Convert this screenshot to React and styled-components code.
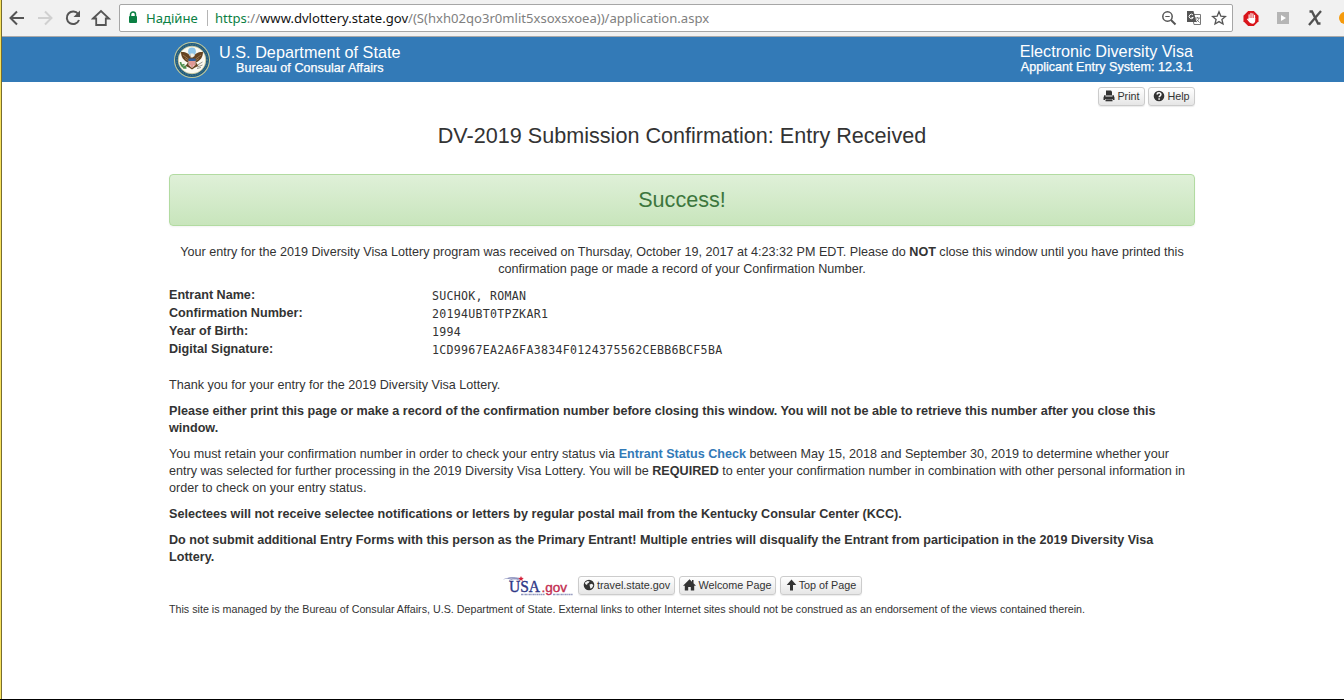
import React from 'react';
import styled, { createGlobalStyle } from 'styled-components';

const Global = createGlobalStyle`
  * { box-sizing: border-box; }
  html, body { margin: 0; padding: 0; height: 700px; overflow: hidden; background: #fff; }
  #root { height: 700px; }
  body { font: 12.6px/17px "Liberation Sans", Arial, sans-serif; color: #333; }
`;

const Screen = styled.div`
  height: 700px;
  border-bottom: 1px solid #000;
  position: relative;
  display: flex;
  flex-direction: column;
`;
const EdgeStripe = styled.div`
  position: absolute;
  left: 0;
  top: 0;
  width: 2px;
  height: 699px;
  background: #f7e15c;
  border-right: 1px solid #776d30;
`;
const BrowserBar = styled.div`
  height: 37px;
  flex: none;
  background: #f1f1f1;
  border-bottom: 1px solid #a9a9a9;
  display: flex;
  align-items: center;
  padding-left: 7px;
  overflow: hidden;
`;
const NavIcons = styled.div`
  display: flex;
  gap: 8px;
  width: 112px;
  flex: none;
  svg { flex: none; }
`;
const Address = styled.div`
  width: 1114px;
  height: 28px;
  flex: none;
  background: #fff;
  border: 1px solid #a6a6a6;
  border-radius: 2px;
  display: flex;
  align-items: center;
  padding: 0 5px 0 8px;
  font: 13.09px/20px "Noto Sans", "Open Sans", sans-serif;
  white-space: nowrap;
`;
const Secure = styled.span`
  color: #0b8043;
  margin-left: 8px;
  width: 61px;
`;
const Divider = styled.span`
  width: 1px;
  height: 16px;
  background: #b5b5b5;
  margin-right: 7px;
`;
const Url = styled.span`
  color: #808080;
  flex: 1;
  b { font-weight: 400; color: #111; }
  i { font-style: normal; color: #0b8043; }
`;
const AddressIcons = styled.div`
  display: flex;
  gap: 9px;
  align-items: center;
`;
const Extensions = styled.div`
  display: flex;
  align-items: center;
  gap: 16px;
  padding-left: 10px;
  flex: none;
  svg { flex: none; }
`;

const Banner = styled.header`
  height: 45px;
  flex: none;
  background: #337ab7;
  color: #fff;
`;
const Container = styled.div`
  width: 1026px;
  margin-left: 169px;
`;
const BannerInner = styled(Container)`
  height: 45px;
  display: flex;
  align-items: center;
  padding: 0 2px 0 4px;
`;
const Agency = styled.div`
  margin: 0 auto 0 8px;
  text-align: center;
`;
const SystemName = styled.div`
  text-align: right;
  margin-top: -2px;
`;
const BannerTitle = styled.div`
  font-size: 16.2px;
  line-height: 18px;
  white-space: nowrap;
  letter-spacing: ${p => p.$ls || 0}px;
`;
const BannerSub = styled.div`
  font-size: 12.6px;
  line-height: 15px;
  white-space: nowrap;
  -webkit-text-stroke: 0.25px #fff;
  letter-spacing: ${p => p.$ls || 0}px;
`;
const Toolbar = styled.div`
  display: flex;
  justify-content: flex-end;
  gap: 3px;
  padding-top: 5px;
`;
const Button = styled.button`
  height: 19px;
  width: ${p => p.$w}px;
  padding: 0 0 2px;
  display: flex;
  align-items: center;
  justify-content: center;
  gap: 2px;
  font: 10.8px/16px "Liberation Sans", Arial, sans-serif;
  color: #333;
  white-space: nowrap;
  border: 1px solid #ccc;
  border-radius: 3px;
  background: linear-gradient(#fff, #e6e6e6);
  box-shadow: 0 1px 1px rgba(0, 0, 0, 0.08);
`;
const Title = styled.h1`
  margin: 17px 0 0;
  font-size: 21.6px;
  line-height: 26px;
  font-weight: 400;
  text-align: center;
`;
const Alert = styled.div`
  margin-top: 25px;
  height: 52px;
  border: 1px solid #b2dba1;
  border-radius: 4px;
  background: linear-gradient(#dff0d8, #c8e5bc);
  box-shadow: 0 1px 2px rgba(0, 0, 0, 0.05);
  color: #3c763d;
  font-size: 21.6px;
  line-height: 49px;
  text-align: center;
`;
const Paragraph = styled.p`
  margin: ${p => p.$top ?? 9}px 0 0;
  text-align: ${p => (p.$center ? 'center' : 'left')};
  font-weight: ${p => (p.$bold ? 700 : 400)};
`;
const Line = styled.span`
  display: block;
  white-space: nowrap;
`;
const Details = styled.dl`
  margin: 8px 0 0;
  display: grid;
  grid-template-columns: 263px 1fr;
  grid-auto-rows: 18px;
  line-height: 18px;
`;
const Term = styled.dt`
  font-weight: 700;
`;
const Value = styled.dd`
  margin: 0;
  padding-top: 1px;
  font-family: "DejaVu Sans Mono", monospace;
  font-size: 11.6px;
  letter-spacing: 0.28px;
`;
const Link = styled.a`
  color: #337ab7;
  font-weight: 700;
`;
const FooterLinks = styled.div`
  display: flex;
  gap: 4px;
  margin: 10px 0 0 333px;
  height: 21px;
`;
const FinePrint = styled.div`
  margin-top: 4px;
  font-size: 10.71px;
  line-height: 17px;
  white-space: nowrap;
`;

const Stroke = ({ w = 20, color = '#555', sw = 2, children }) => (
  <svg width={w} height="20" viewBox={`0 0 ${w} 20`} fill="none" stroke={color} strokeWidth={sw}>{children}</svg>
);

const Seal = () => (
  <svg width="38" height="38" viewBox="0 0 38 38">
    <circle cx="19" cy="19" r="18" fill="#c3ca9a" />
    <circle cx="19" cy="19" r="17" fill="#215b80" />
    <circle cx="19" cy="19" r="15.400" fill="none" stroke="#4f8288" strokeWidth="1" strokeDasharray="1.2 1.3" />
    <circle cx="19" cy="19" r="13.800" fill="#fbfaf2" stroke="#d3cb96" strokeWidth=".8" />
    <circle cx="19" cy="10.400" r="3.900" fill="#8fc6e8" />
    <path d="M17 15.500c-1-3.500-5-5-9-4.500 0 5 2.500 8.500 7 10.500L12.500 25l3.500 1.500 3 2 3-2 3.500-1.500-2.500-3.500C27.500 19.500 30 16 30 11c-4-.5-8 1-9 4.500l-1-2h-2z" fill="#654422" />
    <path d="M10 14l5.500 4M12 17.500l4 2.500M28 14l-5.500 4M26 17.500L22 20" stroke="#a5835a" strokeWidth=".8" />
    <path d="M17.500 12.500h3l1 2.500-2 1.500h-2z" fill="#f1eee2" />
    <path d="M15.500 17.500h7v2.500h-7z" fill="#315f9d" />
    <path d="M15.500 20h7v4l-3.500 3-3.500-3z" fill="#f3d8d2" />
    <path d="M17 20v4.500M19 20v6M21 20v4.500" stroke="#c94c4c" strokeWidth=".9" />
    <path d="M7.500 21c.5 4 3 6 6 6M8.500 24.500l3-1M10 27l3-2" stroke="#4d8e4c" strokeWidth="1.700" fill="none" />
    <path d="M24.500 24l5-3M24.500 26l5-2M24 27.500l4-1" stroke="#8c8b82" strokeWidth=".9" />
  </svg>
);

const PrintIcon = () => (
  <svg width="12" height="12" viewBox="0 0 12 12">
    <path d="M3 .5h5l1 1V5.500H3z" fill="#333" />
    <path d="M1.500 5h1v1.500h7V5h1l1 2.500V10H10V8.500H2V10H.5V7.500z" fill="#333" />
    <path d="M2.500 9.300h7v2h-7z" fill="#333" />
    <path d="M1.500 7h9v2h-9z" fill="#333" />
  </svg>
);
const HelpIcon = () => (
  <svg width="12" height="12" viewBox="0 0 12 12">
    <circle cx="6" cy="6" r="5.300" fill="#333" />
    <path d="M4.200 4.500c0-2.200 3.800-2.200 3.700 0 0 1.300-1.700 1.300-1.800 2.700M6.100 8.200v1.500" fill="none" stroke="#fff" strokeWidth="1.500" />
  </svg>
);
const GlobeIcon = () => (
  <svg width="12" height="12" viewBox="0 0 12 12">
    <circle cx="6" cy="6" r="5.300" fill="#333" />
    <path d="M2 3.500L4.500 2l2.300.4L5.500 4l-1 .5L4 6 2.200 5zM6.500 5.500l2.500-.7 1.300 1.400-1 2.300-1.800 1.300L7 8z" fill="#f3f3f3" />
  </svg>
);
const HomeIcon = () => (
  <svg width="13" height="12" viewBox="0 0 13 12">
    <path d="M6.500.3l2.500 2.400V1h1.500v3.200L13 6.700h-1.800V11.500H7.800V8H5.200v3.500H1.800V6.700H0z" fill="#333" />
  </svg>
);
const UpIcon = () => (
  <svg width="11" height="12" viewBox="0 0 11 12">
    <path d="M5.500.5L10.300 6H7v5.500H4V6H.7z" fill="#333" />
  </svg>
);
const UsaLogo = () => (
  <svg width="72" height="22" viewBox="0 0 72 22">
    <path d="M1 3.500C6 .5 14 1 20 3.500 13 2.500 6 2 1 3.500z" fill="#7f86b5" />
    <path d="M7 4.500c4-2.500 9-1.500 11 0M6 2.500c5-1.500 10-1 14 1" fill="none" stroke="#8086b8" strokeWidth=".8" />
    <text x="7" y="16" fontFamily="Liberation Serif, serif" fontSize="17" fill="#303887" stroke="#303887" strokeWidth=".4" textLength="31" lengthAdjust="spacingAndGlyphs">USA</text>
    <text x="39.500" y="16" fontFamily="Liberation Sans, sans-serif" fontSize="13.500" fill="#c22c50" stroke="#c22c50" strokeWidth=".4" textLength="25.500" lengthAdjust="spacingAndGlyphs">.gov</text>
    <path d="M19 0l.8 1.700 2 .2-1.500 1.300.4 1.900-1.700-1-1.700 1 .4-1.900-1.500-1.300 2-.2z" fill="#d4223b" />
    <path d="M19 18.500h24M51 18.500h20" stroke="#9297bd" strokeWidth="1.500" strokeDasharray="2 .5 1 .4" />
  </svg>
);

export default function App() {
  return (
    <>
      <Global />
      <Screen>
        <BrowserBar>
          <NavIcons>
            <Stroke><path d="M17 10H4M10 3.500L3.500 10l6.500 6.500" /></Stroke>
            <Stroke color="#d0d0d0"><path d="M3 10h13M10 3.500l6.500 6.500-6.500 6.500" /></Stroke>
            <Stroke><path d="M15.200 6A6.300 6.300 0 1 0 16 12" /><path d="M17 2.500V9h-6.500z" fill="#555" stroke="none" /></Stroke>
            <Stroke><path d="M2 10.500l8-7.500 8 7.500h-3.200v6.500H5.200v-6.500z" strokeWidth="1.800" /></Stroke>
          </NavIcons>
          <Address>
            <svg width="10" height="14" viewBox="0 0 10 14"><path d="M2.500 6V3.500a2.500 2.500 0 0 1 5 0V6" fill="none" stroke="#0b8043" strokeWidth="1.500" /><rect x="1" y="5" width="8" height="7" rx="1" fill="#0b8043" /></svg>
            <Secure>Надійне</Secure>
            <Divider />
            <Url><i>https</i>://<b>www.dvlottery.state.gov</b>/(S(hxh02qo3r0mlit5xsoxsxoea))/application.aspx</Url>
            <AddressIcons>
              <svg width="16" height="16" viewBox="0 0 16 16" fill="none" stroke="#555"><circle cx="6.500" cy="6.500" r="4.700" strokeWidth="1.500" /><path d="M10 10l4.500 4.500" strokeWidth="2" /><path d="M4.300 6.500h4.400" /></svg>
              <svg width="16" height="16" viewBox="0 0 16 16"><path d="M6 4.500h8.500v10H8z" fill="#fff" stroke="#777" /><path d="M1 1h6.500l3 11H1z" fill="#555" /><path d="M7 5a2.200 2.200 0 1 0 .3 2.500H5.500" fill="none" stroke="#fff" /><path d="M9 8h5M11.500 7v1M13 8c-.5 2-1.500 3-3 4M10.500 9.500l3 3" stroke="#666" fill="none" strokeWidth=".8" /></svg>
              <svg width="16" height="16" viewBox="0 0 16 16"><path d="M8 1.800l1.800 4.300 4.600.4-3.500 3 1.100 4.500L8 11.600 4 14l1.100-4.500-3.500-3 4.600-.4z" fill="none" stroke="#555" strokeWidth="1.300" /></svg>
            </AddressIcons>
          </Address>
          <Extensions>
            <svg width="16" height="17" viewBox="0 0 17 17"><path d="M5.500.5h6L16.500 5.500v6L11.500 16.500h-6L.5 11.500v-6z" fill="#d9151b" /><path d="M6.500 9V4.500M8.500 8V3M10.500 8V3.500M12.300 9V5" stroke="#fff" strokeWidth="1.200" strokeLinecap="round" /><path d="M6 8h7v2.500c0 2-1 3.500-3 3.500-2.500 0-3.500-2-6-5 1-.8 1.500 0 2 .5z" fill="#fff" /></svg>
            <svg width="16" height="16" viewBox="0 0 16 16"><rect x="2" y="2" width="12" height="12" fill="#b5b5b5" /><path d="M6 5l5 3-5 3z" fill="#fff" /></svg>
            <svg width="16" height="18" viewBox="0 0 16 18"><path d="M2.500 2.500h2.500L11 14.500h2.500M14 2L2 16" fill="none" stroke="#505050" strokeWidth="2.300" /></svg>
            <svg width="12" height="12" viewBox="0 0 12 12"><circle cx="6" cy="6" r="6" fill="#f59a0c" /></svg>
          </Extensions>
        </BrowserBar>
        <Banner>
          <BannerInner>
            <Seal />
            <Agency>
              <BannerTitle $ls={0.03}>U.S. Department of State</BannerTitle>
              <BannerSub $ls={0.03}>Bureau of Consular Affairs</BannerSub>
            </Agency>
            <SystemName>
              <BannerTitle>Electronic Diversity Visa</BannerTitle>
              <BannerSub>Applicant Entry System: 12.3.1</BannerSub>
            </SystemName>
          </BannerInner>
        </Banner>
        <Container>
          <Toolbar>
            <Button $w={47}><PrintIcon />Print</Button>
            <Button $w={47}><HelpIcon />Help</Button>
          </Toolbar>
          <Title>DV-2019 Submission Confirmation: Entry Received</Title>
          <Alert>Success!</Alert>
          <Paragraph $top={18} $center>
            <Line>Your entry for the 2019 Diversity Visa Lottery program was received on Thursday, October 19, 2017 at 4:23:32 PM EDT. Please do <b>NOT</b> close this window until you have printed this</Line>
            <Line>confirmation page or made a record of your Confirmation Number.</Line>
          </Paragraph>
          <Details>
            <Term>Entrant Name:</Term><Value>SUCHOK, ROMAN</Value>
            <Term>Confirmation Number:</Term><Value>20194UBT0TPZKAR1</Value>
            <Term>Year of Birth:</Term><Value>1994</Value>
            <Term>Digital Signature:</Term><Value>1CD9967EA2A6FA3834F0124375562CEBB6BCF5BA</Value>
          </Details>
          <Paragraph $top={19}><Line>Thank you for your entry for the 2019 Diversity Visa Lottery.</Line></Paragraph>
          <Paragraph $bold>
            <Line>Please either print this page or make a record of the confirmation number before closing this window. You will not be able to retrieve this number after you close this</Line>
            <Line>window.</Line>
          </Paragraph>
          <Paragraph>
            <Line>You must retain your confirmation number in order to check your entry status via <Link>Entrant Status Check</Link> between May 15, 2018 and September 30, 2019 to determine whether your</Line>
            <Line>entry was selected for further processing in the 2019 Diversity Visa Lottery. You will be <b>REQUIRED</b> to enter your confirmation number in combination with other personal information in</Line>
            <Line>order to check on your entry status.</Line>
          </Paragraph>
          <Paragraph $bold><Line>Selectees will not receive selectee notifications or letters by regular postal mail from the Kentucky Consular Center (KCC).</Line></Paragraph>
          <Paragraph $bold>
            <Line>Do not submit additional Entry Forms with this person as the Primary Entrant! Multiple entries will disqualify the Entrant from participation in the 2019 Diversity Visa</Line>
            <Line>Lottery.</Line>
          </Paragraph>
          <FooterLinks>
            <UsaLogo />
            <Button $w={97}><GlobeIcon />travel.state.gov</Button>
            <Button $w={97}><HomeIcon />Welcome Page</Button>
            <Button $w={82}><UpIcon />Top of Page</Button>
          </FooterLinks>
          <FinePrint>This site is managed by the Bureau of Consular Affairs, U.S. Department of State. External links to other Internet sites should not be construed as an endorsement of the views contained therein.</FinePrint>
        </Container>
        <EdgeStripe />
      </Screen>
    </>
  );
}
